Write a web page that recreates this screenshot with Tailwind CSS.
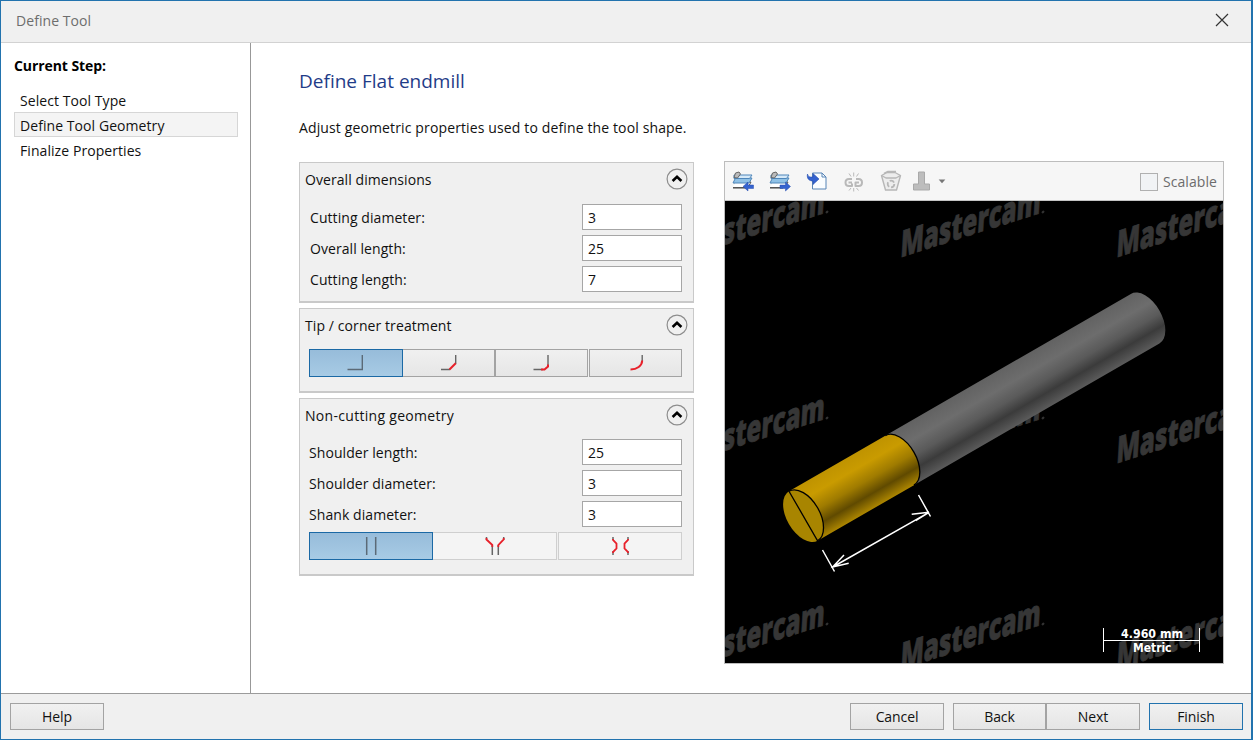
<!DOCTYPE html>
<html lang="en">
<head>
<meta charset="utf-8">
<title>Define Tool</title>
<script src="https://cdn.jsdelivr.net/npm/@tailwindcss/browser@4"></script>
</head>
<body class="w-[1253px] h-[740px] overflow-hidden bg-white font-['Open_Sans','Noto_Sans',sans-serif] text-sm leading-5 tracking-[0.07px] text-[#111]">
<div class="flex flex-col w-full h-full border border-r-2 border-[#2273ae]">
  <header class="flex items-center justify-between h-[42px] shrink-0 bg-[#f0f0f0] border-b border-[#d2d2d2] pl-[15px] pr-[22px] pb-[2px] text-[#6d6d6d]">
    <h1>Define Tool</h1>
    <svg class="w-[14px] h-[14px] -mt-px" viewBox="0 0 14 14" fill="none" stroke="#333" stroke-width="1.2"><path d="M1 1 13 13M13 1 1 13"/></svg>
  </header>
  <div class="flex h-[650px] shrink-0">
    <nav class="w-[250px] shrink-0 border-r border-[#989898] pt-[13px] pl-[13px] pr-3">
      <h2 class="font-bold text-black tracking-[-0.08px]">Current Step:</h2>
      <ul class="mt-[11px]">
        <li class="h-[25px] leading-[27px] pl-[6px]">Select Tool Type</li>
        <li class="h-[25px] leading-[25px] pl-[5px] border border-[#d6d6d6] bg-[#f4f4f4]">Define Tool Geometry</li>
        <li class="h-[25px] leading-[27px] pl-[6px]">Finalize Properties</li>
      </ul>
    </nav>
    <main class="flex-1 pl-[48px] pt-[24px]">
      <h2 class="text-[19px] leading-7 text-[#1f3c88] tracking-[0.01px]">Define Flat endmill</h2>
      <p class="mt-[23px] tracking-[0.13px]">Adjust geometric properties used to define the tool shape.</p>
      <div class="flex mt-[23px] gap-[30px]">
        <div class="w-[395px] flex flex-col gap-[5px] pt-[1px]">
          <section class="h-[141px] border border-b-2 border-[#c9c9c9] bg-[#f0f0f0]">
            <div class="flex items-center justify-between h-[34px] pl-[5px] pr-[5px]"><h3>Overall dimensions</h3>
              <svg class="w-[22px] h-[22px] -mt-[2px]" viewBox="0 0 22 22" fill="none"><circle cx="11" cy="11" r="9.9" fill="#f0f0f0" stroke="#8d8d8d" stroke-width="1.2"/><path d="M6.6 13 11 8.8 15.4 13" stroke="#000" stroke-width="2.6"/></svg></div>
            <div class="flex flex-col gap-[5px] pt-[7px] pl-[10px] pr-[11px]">
              <label class="flex items-start justify-between h-[26px] leading-[28px]">Cutting diameter:<span class="w-[100px] h-[26px] border border-[#a6a6a6] bg-white pl-[5px] leading-[25px]">3</span></label>
              <label class="flex items-start justify-between h-[26px] leading-[28px]">Overall length:<span class="w-[100px] h-[26px] border border-[#a6a6a6] bg-white pl-[5px] leading-[25px]">25</span></label>
              <label class="flex items-start justify-between h-[26px] leading-[28px]">Cutting length:<span class="w-[100px] h-[26px] border border-[#a6a6a6] bg-white pl-[5px] leading-[25px]">7</span></label>
            </div>
          </section>
          <section class="h-[85px] border border-b-2 border-[#c9c9c9] bg-[#f0f0f0]">
            <div class="flex items-center justify-between h-[34px] pl-[5px] pr-[5px]"><h3 class="tracking-[0.09px]">Tip / corner treatment</h3>
              <svg class="w-[22px] h-[22px] -mt-[2px]" viewBox="0 0 22 22" fill="none"><circle cx="11" cy="11" r="9.9" fill="#f0f0f0" stroke="#8d8d8d" stroke-width="1.2"/><path d="M6.6 13 11 8.8 15.4 13" stroke="#000" stroke-width="2.6"/></svg></div>
            <div class="flex mt-[6px] ml-[9px] h-7">
              <div class="w-[94px] border border-[#1b69a5] bg-gradient-to-b from-[#97bcda] to-[#a7cbe5]"><svg class="w-[91px] h-[26px]" viewBox="0 0 91 26" fill="none" stroke="#5b6a77" stroke-width="1.4"><path d="M37.500 19.5H52.300V5"/></svg></div>
              <div class="w-[92px] border border-l-0 border-[#a3a3a3] bg-gradient-to-b from-[#f0f0f0] to-[#e6e6e6]"><svg class="w-[91px] h-[26px]" viewBox="0 0 91 26" fill="none" stroke="#666" stroke-width="1.4"><path d="M38 19.5H47M52.7 14V5"/><path d="M46.5 19.5 52.7 13.2" stroke="#e8202a" stroke-width="2"/></svg></div>
              <div class="w-[93px] border border-[#a3a3a3] bg-gradient-to-b from-[#f0f0f0] to-[#e6e6e6]"><svg class="w-[91px] h-[26px]" viewBox="0 0 91 26" fill="none" stroke="#666" stroke-width="1.4"><path d="M37.500 19.5H47M52 15V5"/><path d="M45 19.5H48.500L52 16.500V14.500" stroke="#e8202a" stroke-width="2"/></svg></div>
              <div class="w-[93px] border border-[#a3a3a3] ml-px bg-gradient-to-b from-[#f0f0f0] to-[#e6e6e6]"><svg class="w-[91px] h-[26px]" viewBox="0 0 91 26" fill="none" stroke="#666" stroke-width="1.4"><path d="M52.2 11V5"/><path d="M40.5 19.5C47 19.5 52 16 52.2 10.5" stroke="#e8202a" stroke-width="2"/></svg></div>
            </div>
          </section>
          <section class="h-[178px] border border-b-2 border-[#c9c9c9] bg-[#f0f0f0]">
            <div class="flex items-center justify-between h-[34px] pl-[5px] pr-[5px]"><h3 class="tracking-[0.3px]">Non-cutting geometry</h3>
              <svg class="w-[22px] h-[22px] -mt-[2px]" viewBox="0 0 22 22" fill="none"><circle cx="11" cy="11" r="9.9" fill="#f0f0f0" stroke="#8d8d8d" stroke-width="1.2"/><path d="M6.6 13 11 8.8 15.4 13" stroke="#000" stroke-width="2.6"/></svg></div>
            <div class="flex flex-col gap-[5px] pt-[6px] pl-[9px] pr-[11px]">
              <label class="flex items-start justify-between h-[26px] leading-[28px]">Shoulder length:<span class="w-[100px] h-[26px] border border-[#a6a6a6] bg-white pl-[5px] leading-[25px]">25</span></label>
              <label class="flex items-start justify-between h-[26px] leading-[28px]">Shoulder diameter:<span class="w-[100px] h-[26px] border border-[#a6a6a6] bg-white pl-[5px] leading-[25px]">3</span></label>
              <label class="flex items-start justify-between h-[26px] leading-[28px]">Shank diameter:<span class="w-[100px] h-[26px] border border-[#a6a6a6] bg-white pl-[5px] leading-[25px]">3</span></label>
            </div>
            <div class="flex mt-[5px] ml-[9px] h-7">
              <div class="w-[124px] border border-[#1b69a5] bg-gradient-to-b from-[#97bcda] to-[#a7cbe5]"><svg class="w-[122px] h-[26px]" viewBox="0 0 122 26" fill="none" stroke="#5b6a77" stroke-width="1.5"><path d="M56.700 4V22M65.700 4V22"/></svg></div>
              <div class="w-[124px] border border-l-0 border-[#cfcfcf] bg-[#f4f4f4]"><svg class="w-[123px] h-[26px]" viewBox="0 0 123 26" fill="none" stroke="#666" stroke-width="1.5"><path d="M53.5 4V7M59.3 12V22M65.3 22V12M70.7 7V4"/><path d="M53.5 5V6.500L59.3 12V14M65.3 14V12L70.7 6.500V5" stroke="#e8202a" stroke-width="1.8"/></svg></div>
              <div class="w-[124px] border border-[#cfcfcf] ml-px bg-[#f4f4f4]"><svg class="w-[122px] h-[26px]" viewBox="0 0 122 26" fill="none" stroke="#666" stroke-width="1.5"><path d="M54 4V7M54 18V22M69 4V7M69 18V22"/><path d="M54 6V7L57.500 10.500V15.500L54 19V20M69 6V7L65.500 10.500V15.500L69 19V20" stroke="#e8202a" stroke-width="1.8"/></svg></div>
            </div>
          </section>
        </div>
        <section class="w-[500px] h-[503px] border border-[#bdbdbd] flex flex-col">
          <div class="h-[39px] shrink-0 flex items-center bg-[#f6f6f6] border-b border-[#c4c4c4] pr-[6px]">
            <svg class="w-[225px] h-[38px]" viewBox="725 162.500 225 38" fill="none" stroke-linejoin="round">
              <defs><g id="sheets">
                <path d="M1 17.500H14M2 13.500H15" stroke="#444" stroke-width="1.200"/>
                <path d="M3 11.500H19L16 17H1" stroke="#555" fill="#fff"/>
                <path d="M3.500 7.500H20L17 12.500H1z" fill="#8fc1e6" stroke="#4e86ba"/>
                <path d="M2 4.500H20L17.500 8H2z" fill="#d5e9f8" stroke="#4e86ba"/>
                <path d="M2 7 3.500 2.500 7 1.500 8.500 3.500 5.500 7.500z" fill="#bbb" stroke="#666"/>
              </g></defs>
              <g transform="translate(732 171)"><use href="#sheets"/><path d="M11 16 16 11.500V14.500H21.500V18H16V20.500z" fill="#3563cf" stroke="#284fae" stroke-width=".5"/></g>
              <g transform="translate(769 171)"><use href="#sheets"/><path d="M21.500 16 16.500 11.500V14.500H11V18H16.500V20.500z" fill="#3563cf" stroke="#284fae" stroke-width=".5"/></g>
              <path d="M812.500 173.500H822L826 177.500V189.500H812.500z" fill="#fafdff" stroke="#5684b6"/><path d="M822 173.500V177.500H826" stroke="#5684b6"/>
              <path d="M807.500 174.500C808 178 811 177.500 813 177.500V174L819 179.500 813 185V181.500C809 181.500 806.500 179 807.500 174.500z" fill="#3563cf" stroke="#284fae" stroke-width=".6"/>
              <g stroke="#b9b9b9"><path d="M852 179.500H849Q845.500 179.500 845.500 183T849 186.500H852V184M852 183H848.500M856 179.500H858.500Q862 179.500 862 183T858.500 186.500H855.500V183H859" stroke-width="2"/><path d="M849 174 851 177M853.700 173V177M858.500 174 856.500 177M849 191 851 188.500M853.700 192V188.500M858.500 191 856.500 188.500" stroke-width="1"/></g>
              <g stroke="#b7b7b7" stroke-width="1.400"><path d="M881.500 176 885.500 190.500H896.500L900.500 176 895 173H887z" fill="#ededed"/><path d="M881.500 176 886 178.500H896L900.500 176M884 174 888 172H896"/><circle cx="891" cy="184.500" r="3.300" stroke-dasharray="5 1.900" stroke-width="1.800"/></g>
              <path d="M918.500 172.500H924.500V184.500H929.500V190.500H913.500V184.500H918.500z" fill="#bdbdbd" stroke="#a9a9a9"/>
              <path d="M938.700 180H945.300L942 183.700z" fill="#777"/>
            </svg>
            <label class="ml-auto flex items-center pt-px text-[#6c6c6c]"><span class="w-[18px] h-[18px] mr-[5px] border border-[#b0b0b0] bg-[#f1f3f5]"></span>Scalable</label>
          </div>
          <svg class="w-[498px] h-[462px] bg-black" viewBox="725 201 498 462">
            <defs>
              <linearGradient id="steel" x1="0" y1="0" x2="0" y2="1"><stop offset="0" stop-color="#626262"/><stop offset=".3" stop-color="#6d6d6d"/><stop offset=".55" stop-color="#5a5a5a"/><stop offset=".76" stop-color="#3b3b3b"/><stop offset="1" stop-color="#5b5b5b"/></linearGradient>
              <linearGradient id="gold" x1="0" y1="0" x2="0" y2="1"><stop offset="0" stop-color="#bf9300"/><stop offset=".25" stop-color="#c99b00"/><stop offset=".52" stop-color="#9f7b00"/><stop offset=".76" stop-color="#604a00"/><stop offset="1" stop-color="#ad8600"/></linearGradient>
            </defs>
            <g fill="#363636" stroke="#363636" stroke-width=".8" font-family="Open Sans, sans-serif" font-weight="800" font-size="37" letter-spacing="0">
              <g transform="matrix(1 -.318 -.06 1 684 257.500)"><text textLength="140" lengthAdjust="spacingAndGlyphs">Mastercam</text><circle cx="143" cy="0" r="1"/></g>
              <g transform="matrix(1 -.318 -.06 1 900 257.500)"><text textLength="140" lengthAdjust="spacingAndGlyphs">Mastercam</text><circle cx="143" cy="0" r="1"/></g>
              <g transform="matrix(1 -.318 -.06 1 1116 257.500)"><text textLength="140" lengthAdjust="spacingAndGlyphs">Mastercam</text></g>
              <g transform="matrix(1 -.318 -.06 1 684 463.500)"><text textLength="140" lengthAdjust="spacingAndGlyphs">Mastercam</text><circle cx="143" cy="0" r="1"/></g>
              <g transform="matrix(1 -.318 -.06 1 900 463.500)"><text textLength="140" lengthAdjust="spacingAndGlyphs">Mastercam</text><circle cx="143" cy="0" r="1"/></g>
              <g transform="matrix(1 -.318 -.06 1 1116 463.500)"><text textLength="140" lengthAdjust="spacingAndGlyphs">Mastercam</text></g>
              <g transform="matrix(1 -.318 -.06 1 684 669.500)"><text textLength="140" lengthAdjust="spacingAndGlyphs">Mastercam</text><circle cx="143" cy="0" r="1"/></g>
              <g transform="matrix(1 -.318 -.06 1 900 669.500)"><text textLength="140" lengthAdjust="spacingAndGlyphs">Mastercam</text><circle cx="143" cy="0" r="1"/></g>
              <g transform="matrix(1 -.318 -.06 1 1116 669.500)"><text textLength="140" lengthAdjust="spacingAndGlyphs">Mastercam</text></g>
            </g>
            <g transform="translate(803.300 516) rotate(-30)">
              <path d="M111 -28.600H394.700A16.500 28.600 0 0 1 394.700 28.600H111z" fill="url(#steel)"/>
              <path d="M0 -28.600H111.200A16.500 28.600 0 0 1 111.200 28.600H0z" fill="url(#gold)"/>
              <path d="M111.200 -28.600A16.500 28.600 0 0 1 111.200 28.600" fill="none" stroke="#000" stroke-width="1.300"/>
              <ellipse rx="16.500" ry="28.600" fill="#a88500"/>
              <path d="M0 -28.600A16.500 28.600 0 0 1 0 28.600z" fill="none" stroke="#000" stroke-width="1.300"/>
            </g>
            <path d="M832.700 567 929 512.300M822.500 550 834.500 571.500M918.500 495 930.500 516.500M844 555 832.700 567 848.700 563.300M911.700 514.300 929 512.300 915.700 520.500" fill="none" stroke="#fff" stroke-width="1.500"/>
            <path d="M1103.500 628V652M1199.500 628V652M1103.500 640.500H1199.500" stroke="#fff"/>
            <g fill="#fff" font-family="DejaVu Sans, sans-serif" font-weight="700" font-size="12" letter-spacing="0"><text x="1121" y="638" textLength="62" lengthAdjust="spacingAndGlyphs">4.960 mm</text><text x="1133" y="652" textLength="38.500" lengthAdjust="spacingAndGlyphs">Metric</text></g>
          </svg>
        </section>
      </div>
    </main>
  </div>
  <footer class="flex-1 flex items-center border-t border-[#9b9b9b] bg-[#f0f0f0] pl-[9px] pr-[8px] tracking-[-0.1px]">
    <button class="w-[94px] h-[27px] border border-[#a3a3a3] bg-gradient-to-b from-[#f1f1f1] to-[#e5e5e5]">Help</button>
    <button class="ml-auto w-[94px] h-[27px] border border-[#a3a3a3] bg-gradient-to-b from-[#f1f1f1] to-[#e5e5e5]">Cancel</button>
    <button class="ml-[9px] w-[93px] h-[27px] border border-[#a3a3a3] bg-gradient-to-b from-[#f1f1f1] to-[#e5e5e5]">Back</button>
    <button class="w-[94px] h-[27px] border border-[#a3a3a3] bg-gradient-to-b from-[#f1f1f1] to-[#e5e5e5]">Next</button>
    <button class="ml-[9px] w-[94px] h-[27px] border border-[#2273ae] bg-gradient-to-b from-[#f1f1f1] to-[#e5e5e5]">Finish</button>
  </footer>
</div>
</body>
</html>
